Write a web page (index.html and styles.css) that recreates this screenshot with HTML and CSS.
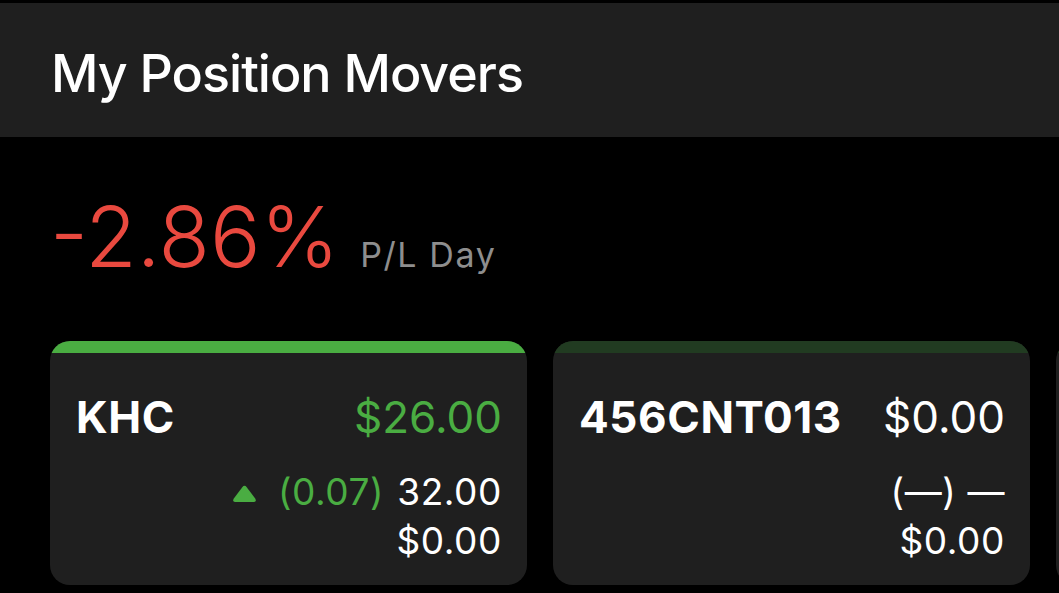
FILE: index.html
```html
<!DOCTYPE html>
<html lang="en">
<head>
    <meta charset="UTF-8">
    <meta name="viewport" content="width=device-width, initial-scale=1.0">
    <title>My Position Movers</title>
    <link rel="stylesheet" href="styles.css">
</head>
<body>
    <div class="header">
        <h1 class="title">My Position Movers</h1>
    </div>

    <div class="summary">
        <span class="pl-value">-2.86%</span>
        <span class="pl-label">P/L Day</span>
    </div>

    <div class="movers">
        <div class="card">
            <div class="card-bar up"></div>
            <div class="card-body">
                <div class="card-top">
                    <span class="symbol">KHC</span>
                    <span class="price green">$26.00</span>
                </div>
                <div class="card-line">
                    <svg class="arrow" width="25" height="18" viewBox="0 0 25 18">
                        <path d="M10.3 2.2 Q12.5 -0.6 14.7 2.2 L23.2 13.6 Q25 17 21.4 17 L3.6 17 Q0 17 1.8 13.6 Z" fill="#4aad42"/>
                    </svg>
                    <span class="green">(0.07)</span>
                    <span>32.00</span>
                </div>
                <div class="card-line">$0.00</div>
            </div>
        </div>

        <div class="card">
            <div class="card-bar flat"></div>
            <div class="card-body">
                <div class="card-top">
                    <span class="symbol">456CNT013</span>
                    <span class="price">$0.00</span>
                </div>
                <div class="card-line">(—) —</div>
                <div class="card-line">$0.00</div>
            </div>
        </div>

        <div class="card">
            <div class="card-bar flat"></div>
            <div class="card-body"></div>
        </div>
    </div>
</body>
</html>
```

FILE: styles.css
```css
    body {
        margin: 0;
        background-color: #000;
        font-family: Inter, Roboto, 'Liberation Sans', sans-serif;
        color: #fff;
        overflow: hidden;
    }

    .header {
        margin-top: 3px;
        height: 134px;
        background-color: #1f1f1f;
        display: flex;
        align-items: center;
        padding-left: 51px;
    }

    .title {
        margin: 6px 0 0 0;
        font-size: 52px;
        font-weight: 500;
        letter-spacing: -1px;
    }

    .summary {
        display: flex;
        align-items: baseline;
        padding: 58px 0 0 50px;
        height: 152px;
        box-sizing: border-box;
    }

    .pl-value {
        font-size: 84px;
        font-weight: 300;
        color: #e9493f;
        line-height: 1;
    }

    .pl-label {
        margin-left: 21px;
        font-size: 34px;
        color: #8e8e8e;
        letter-spacing: 1.6px;
    }

    .movers {
        display: flex;
        gap: 26px;
        padding-left: 50px;
        margin-top: 52px;
        overflow: hidden;
    }

    .card {
        flex: 0 0 477px;
        height: 244px;
        background-color: #1f1f1f;
        border-radius: 20px;
        overflow: hidden;
    }

    .card-bar {
        height: 12px;
    }

    .card-bar.up {
        background-color: #4aad42;
    }

    .card-bar.flat {
        background-color: #213b21;
    }

    .card-body {
        padding: 40px 25px 0 26px;
        display: flex;
        flex-direction: column;
        align-items: flex-end;
    }

    .card-top {
        align-self: stretch;
        display: flex;
        justify-content: space-between;
        align-items: baseline;
        margin-bottom: 26px;
    }

    .symbol {
        font-size: 44px;
        font-weight: 700;
        line-height: 1.1;
        letter-spacing: 0.6px;
    }

    .price {
        font-size: 44px;
        line-height: 1.1;
    }

    .card-line {
        display: flex;
        align-items: center;
        gap: 13px;
        font-size: 37px;
        line-height: 49px;
        letter-spacing: 0.6px;
    }

    .green {
        color: #4aad42;
    }

    .arrow {
        margin-right: 8px;
        margin-top: 4px;
    }
```
